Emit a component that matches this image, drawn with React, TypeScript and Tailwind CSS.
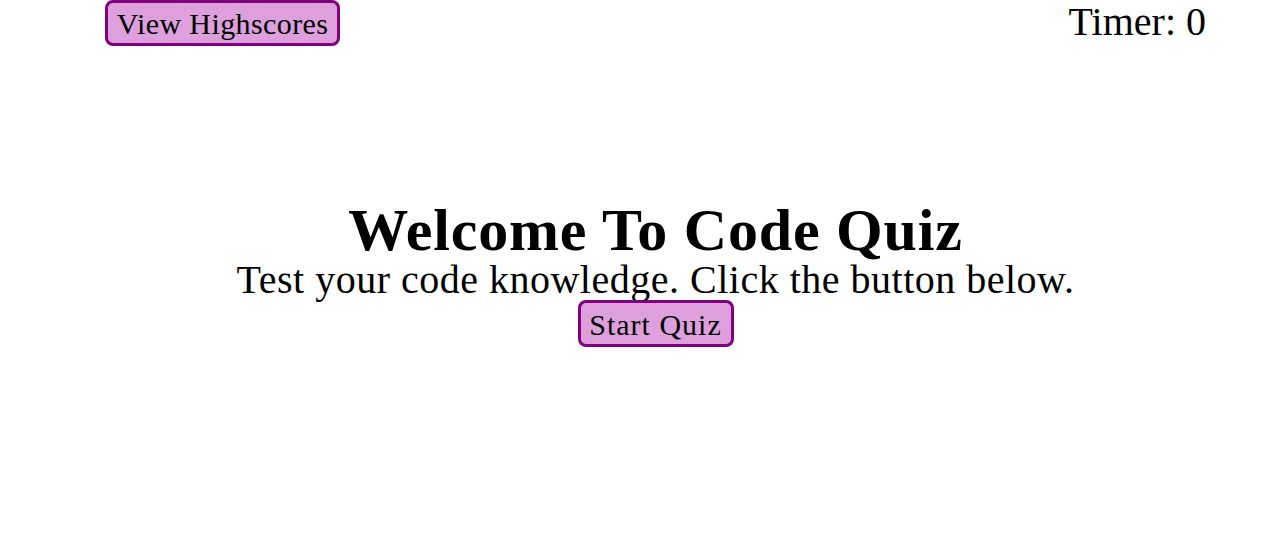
export default function App() {
  return (
    <div className="min-h-[560px] bg-white font-['Liberation_Serif','Times_New_Roman',serif] text-black">
      <header className="flex items-start justify-between pl-[105px] pr-[70px]">
        <button
          type="button"
          className="w-[235px] h-[46px] rounded-[8px] border-[3px] border-[#800080] bg-[#dda0dd] text-[30px] leading-[30px] pt-[2px] text-center tracking-[0.4px]"
        >
          View Highscores
        </button>
        <div className="text-[40px] leading-[44px]">Timer: 0</div>
      </header>

      <main className="mt-[154px] flex flex-col items-center pl-[35px] text-center">
        <h1 className="text-[60px] font-bold leading-none tracking-[0.8px]">Welcome To Code Quiz</h1>
        <p className="text-[40px] leading-[40px] tracking-[0.5px]">
          Test your code knowledge. Click the button below.
        </p>
        <button
          type="button"
          className="w-[156px] h-[47px] rounded-[8px] border-[3px] border-[#800080] bg-[#dda0dd] text-[30px] leading-[30px] pt-[2px] text-center tracking-[1px]"
        >
          Start Quiz
        </button>
      </main>
    </div>
  );
}
